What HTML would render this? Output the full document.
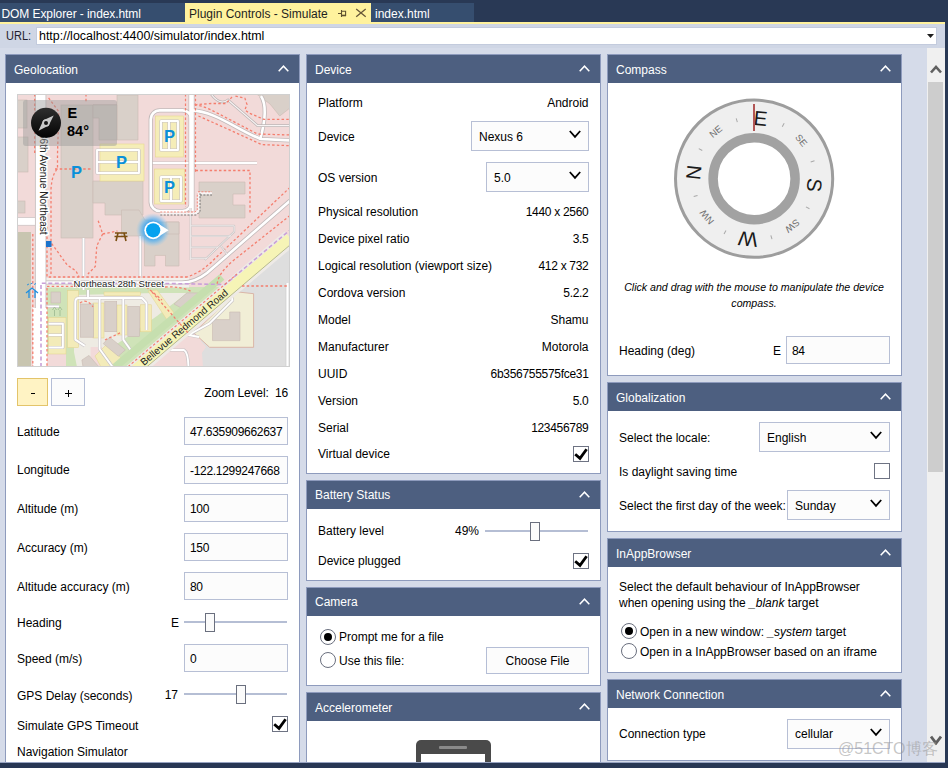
<!DOCTYPE html>
<html><head><meta charset="utf-8">
<style>
*{box-sizing:border-box;margin:0;padding:0}
html,body{width:948px;height:768px;overflow:hidden}
body{position:relative;background:#d5dbe9;font-family:"Liberation Sans",sans-serif;font-size:12px;color:#000}
.a{position:absolute}
.t{position:absolute;white-space:nowrap;line-height:14px}
.panel{position:absolute;background:#fff;border:1px solid #8e9bbd;overflow:hidden}
.hdr{position:absolute;left:0;top:0;right:0;height:28px;background:#4d5f80;color:#fff}
.hdr .tt{position:absolute;left:8px;top:7.5px;line-height:14px;white-space:nowrap}
.hdr svg{position:absolute;left:272px;top:10px}
.inp{position:absolute;border:1px solid #b7bfd5;background:#fcfcfc}
.sel{position:absolute;border:1px solid #b7bfd5;background:#fcfcfc}
.sel svg{position:absolute;right:7.4px;top:8.4px}
.cb{position:absolute;width:16px;height:16px;border:1px solid #6e7383;background:#fff}
.track{height:2px;background:#b5bed4}
.thumb{border:1px solid #6a6f7e;background:#fbfbfb}
.radio{position:absolute;width:16px;height:16px;border:1px solid #6a6f7e;border-radius:50%;background:#fff}
.radio.on::after{content:"";position:absolute;left:3px;top:3px;width:8px;height:8px;border-radius:50%;background:#000}
</style></head><body>
<div class="a" style="left:0;top:0;width:948px;height:22px;background:#293955"></div>
<div class="a" style="left:0;top:3px;width:185px;height:19px;background:#364e6f"></div>
<div class="a" style="left:185px;top:3px;width:186px;height:19px;background:#fff29d"></div>
<div class="a" style="left:371px;top:3px;width:103px;height:19px;background:#364e6f"></div>
<div class="a" style="left:0;top:22px;width:945px;height:2px;background:#fff29d"></div>
<div class="a" style="left:0;top:24px;width:945px;height:24px;background:#cfd6e5"></div>
<div class="t" style="left:1.5px;top:7px;color:#fff;letter-spacing:-0.08px">DOM Explorer - index.html</div>
<div class="t" style="left:189px;top:7px;color:#1e1e1e">Plugin Controls - Simulate</div>
<svg class="a" style="left:337px;top:9px" width="10" height="9" viewBox="0 0 10 9"><path d="M1 4.5 H4.5 M4.5 1 V8 M4.5 2.3 H8.6 V7 M4.5 6.3 H8.6" fill="none" stroke="#5e5030" stroke-width="1.1"/><path d="M4.5 6.6 H9" stroke="#5e5030" stroke-width="1.4"/></svg>
<svg class="a" style="left:355px;top:8px" width="12" height="10" viewBox="0 0 12 10"><path d="M1.2 1.1 L10.7 8.7 M10.7 1.1 L1.2 8.7" fill="none" stroke="#665638" stroke-width="1.3"/></svg>
<div class="t" style="left:375px;top:7px;color:#fff">index.html</div>
<div class="t" style="left:6px;top:29px;color:#1e1e2e;transform:scaleX(0.92);transform-origin:0 0">URL:</div>
<div class="a" style="left:36px;top:27px;width:901px;height:18px;background:#fff;border:1px solid #c3cbdd"></div>
<div class="t" style="left:39px;top:29px;font-size:12.45px">http://localhost:4400/simulator/index.html</div>
<svg class="a" style="left:927px;top:34px" width="8" height="5" viewBox="0 0 8 5"><path d="M0 0 H7 L3.5 4 Z" fill="#1e1e1e"/></svg>
<div class="a" style="left:927px;top:48px;width:18px;height:714px;background:#f0f0f0"></div>
<div class="a" style="left:928px;top:82px;width:15px;height:390px;background:#cdcdcd"></div>
<svg class="a" style="left:930px;top:64px" width="12" height="10" viewBox="0 0 12 10"><path d="M1 8.5 L6 3 L11 8.5" fill="none" stroke="#606060" stroke-width="2.6"/></svg>
<svg class="a" style="left:929.5px;top:735px" width="12" height="10" viewBox="0 0 12 10"><path d="M1 1.6 L6 8.2 L11 1.6" fill="none" stroke="#5e5e5e" stroke-width="2.8"/></svg>
<div class="panel" style="left:5px;top:54px;width:295px;height:740px"><div class="hdr"><span class="tt" style="top:8px">Geolocation</span><svg width="11" height="7" viewBox="0 0 11 7"><path d="M0.7 6.3 L5.5 1.2 L10.3 6.3" fill="none" stroke="#fff" stroke-width="1.5"/></svg></div></div>
<div class="panel" style="left:306px;top:54px;width:295px;height:420px"><div class="hdr"><span class="tt" style="top:8px">Device</span><svg width="11" height="7" viewBox="0 0 11 7"><path d="M0.7 6.3 L5.5 1.2 L10.3 6.3" fill="none" stroke="#fff" stroke-width="1.5"/></svg></div></div>
<div class="panel" style="left:306px;top:480px;width:295px;height:101px"><div class="hdr"><span class="tt" style="top:7px">Battery Status</span><svg width="11" height="7" viewBox="0 0 11 7"><path d="M0.7 6.3 L5.5 1.2 L10.3 6.3" fill="none" stroke="#fff" stroke-width="1.5"/></svg></div></div>
<div class="panel" style="left:306px;top:587px;width:295px;height:99px"><div class="hdr"><span class="tt" style="top:7px">Camera</span><svg width="11" height="7" viewBox="0 0 11 7"><path d="M0.7 6.3 L5.5 1.2 L10.3 6.3" fill="none" stroke="#fff" stroke-width="1.5"/></svg></div></div>
<div class="panel" style="left:306px;top:692px;width:295px;height:120px"><div class="hdr"><span class="tt" style="top:8px">Accelerometer</span><svg width="11" height="7" viewBox="0 0 11 7"><path d="M0.7 6.3 L5.5 1.2 L10.3 6.3" fill="none" stroke="#fff" stroke-width="1.5"/></svg></div></div>
<div class="panel" style="left:607px;top:54px;width:295px;height:322px"><div class="hdr"><span class="tt" style="top:8px">Compass</span><svg width="11" height="7" viewBox="0 0 11 7"><path d="M0.7 6.3 L5.5 1.2 L10.3 6.3" fill="none" stroke="#fff" stroke-width="1.5"/></svg></div></div>
<div class="panel" style="left:607px;top:382px;width:295px;height:150px"><div class="hdr"><span class="tt" style="top:8px">Globalization</span><svg width="11" height="7" viewBox="0 0 11 7"><path d="M0.7 6.3 L5.5 1.2 L10.3 6.3" fill="none" stroke="#fff" stroke-width="1.5"/></svg></div></div>
<div class="panel" style="left:607px;top:538px;width:295px;height:135px"><div class="hdr"><span class="tt" style="top:8px">InAppBrowser</span><svg width="11" height="7" viewBox="0 0 11 7"><path d="M0.7 6.3 L5.5 1.2 L10.3 6.3" fill="none" stroke="#fff" stroke-width="1.5"/></svg></div></div>
<div class="panel" style="left:607px;top:679px;width:295px;height:82px"><div class="hdr"><span class="tt" style="top:8px">Network Connection</span><svg width="11" height="7" viewBox="0 0 11 7"><path d="M0.7 6.3 L5.5 1.2 L10.3 6.3" fill="none" stroke="#fff" stroke-width="1.5"/></svg></div></div>
<svg class="a" style="left:17px;top:94px" width="273" height="273" viewBox="0 0 273 273">
<defs>
<clipPath id="mc"><rect x="0" y="0" width="273" height="273"/></clipPath>
<radialGradient id="glow"><stop offset="0.4" stop-color="#1e96f0" stop-opacity="0.95"/><stop offset="0.7" stop-color="#46aef5" stop-opacity="0.55"/><stop offset="1" stop-color="#7cc6f7" stop-opacity="0"/></radialGradient>
<linearGradient id="cg" x1="0" y1="0" x2="0" y2="1"><stop offset="0" stop-color="#2e2e2e"/><stop offset="1" stop-color="#030303"/></linearGradient>
</defs>
<g clip-path="url(#mc)">
<rect x="0" y="0" width="273" height="273" fill="#f2dad9"/>
<!-- gray area bottom right (below road) -->
<path d="M273 150 L273 273 L175 273 L189 253 L177 239 Z" fill="#dedede"/>
<!-- pink bottom (below road, left) -->
<path d="M118 273 L176 234 L184 246 L186 273 Z" fill="#f2dad9"/>
<!-- light strip along road lower side -->
<!-- residential block background -->
<path d="M30 193 L210 193 L150 240 L112 273 L30 273 Z" fill="#cfe3b8"/>
<path d="M57 201 L138 199 L170 199 L140 222 L100 250 L85 273 L60 273 L57 258 Z" fill="#eeebe3"/>
<path d="M30 260 L49 260 L49 273 L30 273 Z M73.6 253 L85 253 L92 273 L73.6 273 Z" fill="#f2dad9"/>
<!-- olive strip -->
<rect x="0" y="138" width="14" height="135" fill="#c8c5b0"/>
<!-- yellow residential strips -->
<g fill="#f3ebb9" stroke="#e3d28a" stroke-width="0.5">
<rect x="50.6" y="196.6" width="11" height="57"/>
<rect x="87" y="198" width="36.4" height="3.5"/>
<rect x="76" y="209" width="11" height="35"/>
<rect x="100" y="211" width="10" height="30"/>
<rect x="123.4" y="210.8" width="11" height="27"/>
<rect x="31.6" y="223.5" width="17.4" height="36.5"/>
<path d="M131 197 L140 196 L160 223 L152 229 Z"/>
<path d="M78 262 L90 250 L104 264 L96 273 L84 273 Z"/>
</g>
<!-- beige lot -->
<path d="M177 239 L219.4 197.8 L236.6 199.7 L236.6 253.3 L192.6 253.3 Z" fill="#f1eed6" stroke="#d6a89a" stroke-width="0.8"/>
<!-- buildings -->
<g fill="#d9d0c9" stroke="#c9bab2" stroke-width="0.6">
<rect x="0" y="6" width="10" height="28"/>
<rect x="0" y="43" width="11" height="35"/>
<rect x="0" y="107" width="8" height="12"/>
<rect x="44" y="11" width="32" height="133"/>
<path d="M76 11 L100 11 L100 1 L121 1 L121 46 L100 46 L100 11 Z"/>
<path d="M76 11 L100 11 L100 46 L82 46 L82 24 L76 24 Z"/>
<path d="M76 87 L126 87 L126 121 L88 121 L88 109 L76 109 Z"/>
<path d="M127.5 128 L162 128 L162 172 L148.5 172 L148.5 161.4 L138 161.4 L138 172 L127.5 172 Z"/>
<path d="M104.5 116 L122 116 L128 126 L136 126 L136 142 L104.5 142 Z"/>
<path d="M182 88 L228 88 L228 100 L216 100 L216 111 L228 111 L228 124 L182 124 Z"/>
<path d="M149 128 L162 128 L162 140 L149 140 Z"/>
<path d="M239.5 0 L273 0 L273 14 L262.7 22 L253 10 Z"/>
<rect x="34" y="198" width="9.5" height="11"/>
<rect x="63.3" y="210" width="13.4" height="33.2"/>
<rect x="87.8" y="207.6" width="11.9" height="30.1"/>
<rect x="110.8" y="212.4" width="11.8" height="30.1"/>
<path d="M92.6 243.2 L108.4 255.9 L101.3 262.2 L86.2 249.6 Z"/>
<path d="M64.9 266 L72 261.4 L82 273 L66 273 Z"/>
<path d="M157 210 L170 198.8 L181 199 L168 216 Z"/>
<path d="M195.5 225.6 L212.7 225.6 L212.7 218 L223 218 L223 246.6 L195.5 246.6 Z"/>
</g>
<!-- yellow parking lots -->
<g fill="#f5edb8" stroke="#e8d98e" stroke-width="0.6">
<rect x="83" y="50" width="44" height="37"/>
<rect x="138.5" y="22" width="28" height="41"/>
<rect x="137.5" y="75" width="30" height="35"/>
</g>
<!-- service roads (white with gray casing) -->
<g fill="none" stroke="#c9c4c6" stroke-width="3.2" stroke-linejoin="round">
<rect x="80" y="56" width="42" height="23"/><path d="M80 68 H122"/>
<rect x="144" y="27" width="17" height="29"/><path d="M152 27 V56"/>
<rect x="144" y="83" width="20" height="24"/><path d="M154 83 V107"/>
<path d="M133 69 H240"/>
<path d="M66.5 144 V196 M123.3 142 V186"/>
<path d="M67.8 251.9 L58.3 245.6 V208 Q58.3 204 62 204 H125 L129.5 209 V236 M82.6 204 V255 L95.7 273 M106.3 204 V245.6 L113.7 256 M71 196 V204"/>
<path d="M28.5 212.4 H42 M31.6 229.8 H45.9 V253.5 H31.6 M31.6 241 H45.9"/>
<path d="M213.6 198.8 L215.5 206.4 L192.6 229.4 L171.5 241 L182 243"/>
<path d="M150.4 256 H167 Q171 258 171.5 273"/>
</g>
<g fill="none" stroke="#ffffff" stroke-width="1.9" stroke-linejoin="round">
<rect x="80" y="56" width="42" height="23"/><path d="M80 68 H122"/>
<rect x="144" y="27" width="17" height="29"/><path d="M152 27 V56"/>
<rect x="144" y="83" width="20" height="24"/><path d="M154 83 V107"/>
<path d="M133 69 H240"/>
<path d="M66.5 144 V196 M123.3 142 V186"/>
<path d="M67.8 251.9 L58.3 245.6 V208 Q58.3 204 62 204 H125 L129.5 209 V236 M82.6 204 V255 L95.7 273 M106.3 204 V245.6 L113.7 256 M71 196 V204"/>
<path d="M28.5 212.4 H42 M31.6 229.8 H45.9 V253.5 H31.6 M31.6 241 H45.9"/>
<path d="M213.6 198.8 L215.5 206.4 L192.6 229.4 L171.5 241 L182 243"/>
<path d="M150.4 256 H167 Q171 258 171.5 273"/>
</g>
<path d="M28 188.8 H172" stroke="#f3efeb" stroke-width="9.6"/>
<!-- bigger roads: casing -->
<g fill="none" stroke="#c2baba" stroke-width="4.2">
<rect x="133.7" y="16.4" width="40.8" height="100.6" rx="9"/>
<path d="M174.5 16.4 C198 17 222 37 244 45 L273 46.4"/>
<path d="M244 2 Q252 14 243 46"/>
<path d="M28 188.5 H165 Q178 188.5 190 179 L273 106.7"/>

</g>
<path d="M174.5 0 V117" stroke="#c2baba" stroke-width="6"/>
<g fill="none" stroke="#ffffff" stroke-width="2.6">
<rect x="133.7" y="16.4" width="40.8" height="100.6" rx="9"/>
<path d="M174.5 16.4 C198 17 222 37 244 45 L273 46.4"/>
<path d="M244 2 Q252 14 243 46"/>
<path d="M28 188.5 H165 Q178 188.5 190 179 L273 106.7"/>

</g>
<path d="M174.5 0 V117" stroke="#ffffff" stroke-width="4.6"/>
<path d="M168.5 0 V113 M178.5 0 V78" fill="none" stroke="#f47e6e" stroke-width="1.2" stroke-dasharray="2.5 2.2"/>
<path d="M194 0 Q203 12 211 6 L240.5 31.6 H273" fill="none" stroke="#bdb6b6" stroke-width="2.6"/>
<path d="M194 0 Q203 12 211 6 L240.5 31.6 H273" fill="none" stroke="#f8f4f4" stroke-width="1.1"/>
<path d="M270.5 189 V273" stroke="#c8c8c8" stroke-width="3.6"/>
<path d="M270.5 189 V273" stroke="#ffffff" stroke-width="2.4"/>

<path d="M0 127.4 H20" stroke="#cec7c7" stroke-width="8.6"/>
<path d="M0 127.4 H20" stroke="#ffffff" stroke-width="7"/>
<!-- 136th avenue -->
<path d="M23.7 0 V216 M23 216 V273" stroke="#cec7c7" stroke-width="11.5"/>
<path d="M23.7 0 V216" stroke="#ffffff" stroke-width="9.5"/>
<path d="M23 214 V273" stroke="#ffffff" stroke-width="14"/>
<!-- green band along road -->
<path d="M95 273 L265 133" stroke="#bcd9a4" stroke-width="30" stroke-opacity="0" />
<path d="M98 273 L205 183" stroke="#c6dfaf" stroke-width="7.5"/>
<!-- Bellevue Redmond Road -->
<path d="M112 281 L273 144" stroke="#eeeae6" stroke-width="17"/>
<path d="M112 281 L273 144" stroke="#f6f4b6" stroke-width="10"/>
<path d="M115.5 285 L276.5 148" stroke="#a9b072" stroke-width="0.8"/>
<!-- purple boundary -->
<g fill="none" stroke="#c9a0d8" stroke-width="1.6" stroke-dasharray="4 2.5">
<path d="M24 273 V189.3 H140 L208 190.5 L273 136"/>
</g>
<!-- red dashed footways -->
<g fill="none" stroke="#f47e6e" stroke-width="1.3" stroke-dasharray="2.5 2.2">
<path d="M31.6 3.8 L41.8 17.7 L40.5 60 V75 Q35 80 34 95 V182"/>
<path d="M38 75 H75"/>
<path d="M17.7 0 V60"/>
<path d="M69 0 V8"/>
<path d="M30 133 V183 H170"/>
<path d="M15.8 140 V273 M30 194 V273 M30 192.3 H60"/>
<path d="M34.7 149.6 L50.2 171 L59 177 L62 182.8"/>
<path d="M81.2 126.7 L85.7 140 L79.8 151.8 L78.3 172.5 L70.9 180 M85.7 140 L100.4 137"/>
<path d="M178.5 76.5 H233 V120"/>
<path d="M177.7 10.5 Q186 12 194 15.8 L240.5 40 L273 41"/>
<path d="M181.4 22 L215 37 L244.7 50.6 L273 51.7"/>
<path d="M273 93.4 L196.5 166 Q185 178 170 183"/>
<path d="M273 121.5 L217 166 Q200 180 200 192"/>
<path d="M225 192 H273"/>
<path d="M63 209 Q70 204 76 213"/>
<path d="M148 193 Q165 192 175 198 M135 198 L172 240"/>
<path d="M126 190 L145 206"/>
<path d="M88 246 L105 238"/>

<path d="M218.4 2.1 L227.9 4.2 L230 10.5 L227.9 15.8 L232 19 L246.8 25.3 L273 25.3 M215 3 L209 9.5 L194 9.5 L180 10.5"/>
</g>
<path d="M107.5 275.7 L220 180" fill="none" stroke="#f47e6e" stroke-width="1.2" stroke-dasharray="2.5 2.2"/>
<g fill="none" stroke-linejoin="round"><path d="M173.6 114 V166 M173.6 131.8 H217.2 V137.7 L187.6 166 M173.6 142.1 H214 M173.6 153.2 H201 M173.6 164.3 H190 M204 152 L210 160" stroke="#cbc6c6" stroke-width="2"/><path d="M173.6 114 V166 M173.6 131.8 H217.2 V137.7 L187.6 166 M173.6 142.1 H214 M173.6 153.2 H201 M173.6 164.3 H190 M204 152 L210 160" stroke="#f6f1f1" stroke-width="0.8"/></g>
<path d="M143.3 119.5 H178.8 L181.7 116.6 V99.3 H195" fill="none" stroke="#f8f4f4" stroke-width="2.4"/>
<!-- black dashed steps -->
<path d="M143.3 121 H179.5 L183 117.5 V99.3 M183 101 H195" fill="none" stroke="#666" stroke-width="0.9" stroke-dasharray="2 1.4"/>
<path d="M143.3 118 H178 L180.3 115.7 V99 M181 97.8 H195" fill="none" stroke="#f47e6e" stroke-width="0.9" stroke-dasharray="2 1.4"/>
<!-- blue stop -->
<rect x="29" y="147" width="5.5" height="6" fill="#1b74cc"/>
<!-- shelter icon -->
<path d="M9 199 L15 194 L21 199 M12 197 V204 M18 197 V204" fill="none" stroke="#1e8fe0" stroke-width="1.3"/>
<path d="M10 191 l2 -1 M13.5 190 l2 -1 M17 190.5 l2 -1" stroke="#1e8fe0" stroke-width="0.9"/>
<!-- trees -->
<path d="M37.5 222 v-6 M43 222 v-6 M35.5 216 l2 -3 l2 3 M41 216 l2 -3 l2 3" stroke="#9cb98f" stroke-width="0.8" fill="none"/>
<!-- picnic -->
<path d="M98 139 H110 M97.5 142.5 H110.5 M101 139 L99 147 M107 139 L109 147" stroke="#7a4e10" stroke-width="1.6" fill="none"/>
<!-- P labels -->
<g fill="#0a90da" font-family="Liberation Sans" font-weight="bold" font-size="16.5" text-anchor="middle">
<text x="104.5" y="74">P</text>
<text x="59.5" y="84">P</text>
<text x="152.6" y="48">P</text>
<text x="152.6" y="99">P</text>
</g>
<!-- street labels -->
<text x="0" y="0" font-family="Liberation Sans" font-size="10" fill="#222" stroke="#fff" stroke-width="3" paint-order="stroke" transform="translate(22.8,33.5) rotate(90)">136th Avenue Northeast</text>
<text x="56.6" y="193" font-family="Liberation Sans" font-size="9.5" fill="#222" stroke="#fff" stroke-width="1.6" paint-order="stroke">Northeast 28th Street</text>
<text x="0" y="0" font-family="Liberation Sans" font-size="10" fill="#222" transform="translate(127,272) rotate(-40.4)">Bellevue Redmond Road</text>
<!-- location dot -->
<circle cx="136" cy="136" r="17" fill="url(#glow)"/>
<path d="M142.5 130.5 L151.6 136.3 L142.5 142 Z" fill="#fff"/>
<circle cx="136.2" cy="136.3" r="8.9" fill="#fff"/>
<circle cx="136.2" cy="136.3" r="7.1" fill="#06a2ef"/>
<!-- compass overlay -->
<rect x="6" y="6" width="94" height="46" rx="3" fill="#9a9a9a" fill-opacity="0.45"/>
<circle cx="29" cy="28.8" r="15" fill="url(#cg)"/>
<path d="M21.5 36.7 L26.3 26.3 L31.7 31.5 Z M36.7 21.5 L31.7 31.5 L26.3 26.3 Z" fill="#c8c8c8"/>
<circle cx="29" cy="28.9" r="3.6" fill="#c8c8c8"/>
<circle cx="29" cy="28.9" r="2" fill="#151515"/>
<text x="50.5" y="23.8" font-family="Liberation Sans" font-weight="bold" font-size="14.5" fill="#000">E</text>
<text x="50" y="41.5" font-family="Liberation Sans" font-weight="bold" font-size="14.5" fill="#000">84°</text>
</g>
<rect x="0.5" y="0.5" width="272" height="272" fill="none" stroke="#d0d0d0" stroke-width="1"/>
</svg>

<div class="a" style="left:17px;top:378px;width:31px;height:28px;background:#fff3c4;border:1px solid #e3c46a"></div>
<div class="a" style="left:51px;top:378px;width:34px;height:28px;background:#fcfcfc;border:1px solid #b5bed6"></div>
<div class="a" style="left:31px;top:393px;width:4px;height:1px;background:#000"></div>
<div class="a" style="left:65px;top:393px;width:7px;height:1px;background:#000"></div><div class="a" style="left:68px;top:390px;width:1px;height:7px;background:#000"></div>
<div class="t" style="right:660px;top:385.5px;letter-spacing:-0.15px">Zoom Level:&nbsp; 16</div>
<div class="t" style="left:17px;top:425.4px;">Latitude</div>
<div class="t" style="left:17px;top:463.2px;">Longitude</div>
<div class="t" style="left:17px;top:502.20000000000005px;">Altitude (m)</div>
<div class="t" style="left:17px;top:541.3px;">Accuracy (m)</div>
<div class="t" style="left:17px;top:579.9px;">Altitude accuracy (m)</div>
<div class="t" style="left:17px;top:616.4px;">Heading</div>
<div class="t" style="left:17px;top:652.3px;">Speed (m/s)</div>
<div class="t" style="left:17px;top:688.5px;">GPS Delay (seconds)</div>
<div class="t" style="left:17px;top:718.5px;">Simulate GPS Timeout</div>
<div class="t" style="left:17px;top:745px;">Navigation Simulator</div>
<div class="inp" style="left:184px;top:417px;width:104px;height:28px;"></div>
<div class="t" style="left:190px;top:424.5px;letter-spacing:-0.3px">47.635909662637</div>
<div class="inp" style="left:184px;top:456px;width:104px;height:28px;"></div>
<div class="t" style="left:190px;top:463.5px;letter-spacing:-0.3px">-122.1299247668</div>
<div class="inp" style="left:184px;top:494px;width:104px;height:28px;"></div>
<div class="t" style="left:190px;top:501.5px;letter-spacing:-0.3px">100</div>
<div class="inp" style="left:184px;top:533px;width:104px;height:28px;"></div>
<div class="t" style="left:190px;top:540.5px;letter-spacing:-0.3px">150</div>
<div class="inp" style="left:184px;top:572px;width:104px;height:28px;"></div>
<div class="t" style="left:190px;top:579.5px;letter-spacing:-0.3px">80</div>
<div class="inp" style="left:184px;top:644px;width:104px;height:28px;"></div>
<div class="t" style="left:190px;top:651.5px;letter-spacing:-0.3px">0</div>
<div class="t" style="right:769px;top:616px;">E</div>
<div class="track a" style="left:184px;top:621px;width:103px;height:2px;"></div>
<div class="thumb a" style="left:205px;top:613px;width:10px;height:19px;"></div>
<div class="t" style="right:770px;top:688px;">17</div>
<div class="track a" style="left:184px;top:693px;width:103px;height:2px;"></div>
<div class="thumb a" style="left:236px;top:685px;width:10px;height:19px;"></div>
<div class="cb" style="left:272px;top:716px;width:16px;height:16px;"><svg width="16" height="16" viewBox="0 0 16 16" style="position:absolute;left:-1px;top:-1px"><path d="M2.2 8.3 L7 12.4 L13.6 3.2" fill="none" stroke="#000" stroke-width="2.8"/></svg></div>
<div class="t" style="left:318px;top:96px;">Platform</div>
<div class="t" style="right:359.5px;top:96px;">Android</div>
<div class="t" style="left:318px;top:204.8px;">Physical resolution</div>
<div class="t" style="right:359.5px;top:204.8px;letter-spacing:-0.3px">1440 x 2560</div>
<div class="t" style="left:318px;top:231.9px;">Device pixel ratio</div>
<div class="t" style="right:359.5px;top:231.9px;letter-spacing:-0.3px">3.5</div>
<div class="t" style="left:318px;top:259px;">Logical resolution (viewport size)</div>
<div class="t" style="right:359.5px;top:259px;letter-spacing:-0.3px">412 x 732</div>
<div class="t" style="left:318px;top:286px;">Cordova version</div>
<div class="t" style="right:359.5px;top:286px;letter-spacing:-0.3px">5.2.2</div>
<div class="t" style="left:318px;top:313px;">Model</div>
<div class="t" style="right:359.5px;top:313px;">Shamu</div>
<div class="t" style="left:318px;top:340px;">Manufacturer</div>
<div class="t" style="right:359.5px;top:340px;">Motorola</div>
<div class="t" style="left:318px;top:367px;">UUID</div>
<div class="t" style="right:359.5px;top:367px;letter-spacing:-0.3px">6b356755575fce31</div>
<div class="t" style="left:318px;top:394px;">Version</div>
<div class="t" style="right:359.5px;top:394px;letter-spacing:-0.3px">5.0</div>
<div class="t" style="left:318px;top:420.7px;">Serial</div>
<div class="t" style="right:359.5px;top:420.7px;letter-spacing:-0.3px">123456789</div>
<div class="t" style="left:318px;top:130px;">Device</div>
<div class="sel" style="left:471px;top:121px;width:118px;height:30px;"><svg width="12" height="9" viewBox="0 0 12 9"><path d="M0.8 1 L6 6.8 L11.2 1" fill="none" stroke="#000" stroke-width="1.8"/></svg></div>
<div class="t" style="left:479px;top:130px;">Nexus 6</div>
<div class="t" style="left:318px;top:171px;">OS version</div>
<div class="sel" style="left:486px;top:162px;width:103px;height:30px;"><svg width="12" height="9" viewBox="0 0 12 9"><path d="M0.8 1 L6 6.8 L11.2 1" fill="none" stroke="#000" stroke-width="1.8"/></svg></div>
<div class="t" style="left:494px;top:171px;">5.0</div>
<div class="t" style="left:318px;top:446.7px;">Virtual device</div>
<div class="cb" style="left:573px;top:446px;width:16px;height:16px;"><svg width="16" height="16" viewBox="0 0 16 16" style="position:absolute;left:-1px;top:-1px"><path d="M2.2 8.3 L7 12.4 L13.6 3.2" fill="none" stroke="#000" stroke-width="2.8"/></svg></div>
<div class="t" style="left:318px;top:523.8px;">Battery level</div>
<div class="t" style="right:469px;top:523.8px;">49%</div>
<div class="track a" style="left:485px;top:530px;width:103px;height:2px;"></div>
<div class="thumb a" style="left:530px;top:521.5px;width:10px;height:19px;"></div>
<div class="t" style="left:318px;top:554px;">Device plugged</div>
<div class="cb" style="left:573px;top:553px;width:16px;height:16px;"><svg width="16" height="16" viewBox="0 0 16 16" style="position:absolute;left:-1px;top:-1px"><path d="M2.2 8.3 L7 12.4 L13.6 3.2" fill="none" stroke="#000" stroke-width="2.8"/></svg></div>
<div class="radio on" style="left:320px;top:629px;width:16px;height:16px;"></div>
<div class="t" style="left:339px;top:629.8px;">Prompt me for a file</div>
<div class="radio" style="left:320px;top:652px;width:16px;height:16px;"></div>
<div class="t" style="left:339px;top:653.6px;">Use this file:</div>
<div class="a" style="left:486px;top:647px;width:103px;height:27px;background:#fcfcfc;border:1px solid #b5bed6"></div>
<div class="t" style="left:387.5px;width:300px;text-align:center;top:654.2px;">Choose File</div>
<div class="a" style="left:416px;top:740px;width:75px;height:40px;background:#4a4a4a;border-radius:5px 5px 0 0"></div>
<div class="a" style="left:421px;top:754px;width:64px;height:30px;background:#fff"></div>
<div class="a" style="left:439px;top:746px;width:28px;height:3px;background:#8a8a8a;border-radius:1px"></div>
<svg class="a" style="left:664px;top:90px" width="180" height="180" viewBox="0 0 180 180">
<circle cx="90.1" cy="88.7" r="78.6" fill="#efefef" stroke="#9d9d9d" stroke-width="3"/>
<circle cx="90.1" cy="88.7" r="41" fill="#ffffff" stroke="#a2a2a2" stroke-width="9.5"/>
<g transform="rotate(-84 90.1 88.7)" font-family="Liberation Sans" text-anchor="middle">
<text x="90.1" y="35.2" font-size="20.5" fill="#1a1a1a" transform="rotate(0 90.1 88.7)">N</text>
<text x="90.1" y="35.2" font-size="20.5" fill="#1a1a1a" transform="rotate(90 90.1 88.7)">E</text>
<text x="90.1" y="35.2" font-size="20.5" fill="#1a1a1a" transform="rotate(180 90.1 88.7)">S</text>
<text x="90.1" y="35.2" font-size="20.5" fill="#1a1a1a" transform="rotate(270 90.1 88.7)">W</text>
<text x="90.1" y="31.200000000000003" font-size="9.5" fill="#6e6e6e" transform="rotate(45 90.1 88.7)">NE</text>
<text x="90.1" y="31.200000000000003" font-size="9.5" fill="#6e6e6e" transform="rotate(135 90.1 88.7)">SE</text>
<text x="90.1" y="31.200000000000003" font-size="9.5" fill="#6e6e6e" transform="rotate(225 90.1 88.7)">SW</text>
<text x="90.1" y="31.200000000000003" font-size="9.5" fill="#6e6e6e" transform="rotate(315 90.1 88.7)">NW</text>
<line x1="90.1" y1="29.700000000000003" x2="90.1" y2="25.700000000000003" stroke="#a8a8a8" stroke-width="1" transform="rotate(22.5 90.1 88.7)"/>
<line x1="90.1" y1="29.700000000000003" x2="90.1" y2="25.700000000000003" stroke="#a8a8a8" stroke-width="1" transform="rotate(67.5 90.1 88.7)"/>
<line x1="90.1" y1="29.700000000000003" x2="90.1" y2="25.700000000000003" stroke="#a8a8a8" stroke-width="1" transform="rotate(112.5 90.1 88.7)"/>
<line x1="90.1" y1="29.700000000000003" x2="90.1" y2="25.700000000000003" stroke="#a8a8a8" stroke-width="1" transform="rotate(157.5 90.1 88.7)"/>
<line x1="90.1" y1="29.700000000000003" x2="90.1" y2="25.700000000000003" stroke="#a8a8a8" stroke-width="1" transform="rotate(202.5 90.1 88.7)"/>
<line x1="90.1" y1="29.700000000000003" x2="90.1" y2="25.700000000000003" stroke="#a8a8a8" stroke-width="1" transform="rotate(247.5 90.1 88.7)"/>
<line x1="90.1" y1="29.700000000000003" x2="90.1" y2="25.700000000000003" stroke="#a8a8a8" stroke-width="1" transform="rotate(292.5 90.1 88.7)"/>
<line x1="90.1" y1="29.700000000000003" x2="90.1" y2="25.700000000000003" stroke="#a8a8a8" stroke-width="1" transform="rotate(337.5 90.1 88.7)"/>
</g>
<line x1="90.0" y1="14" x2="90.0" y2="41" stroke="#b25656" stroke-width="2"/>
</svg>

<div class="t" style="left:604px;width:300px;text-align:center;top:280px;font-size:10.6px"><i>Click and drag with the mouse to manipulate the device</i></div>
<div class="t" style="left:604px;width:300px;text-align:center;top:295.5px;font-size:10.6px"><i>compass.</i></div>
<div class="t" style="left:619px;top:344.4px;">Heading (deg)</div>
<div class="t" style="right:167px;top:344.4px;">E</div>
<div class="inp" style="left:786px;top:336px;width:104px;height:28px;"></div>
<div class="t" style="left:792px;top:344.4px;letter-spacing:-0.3px">84</div>
<div class="t" style="left:619px;top:430.7px;">Select the locale:</div>
<div class="sel" style="left:759px;top:422px;width:131px;height:30px;"><svg width="12" height="9" viewBox="0 0 12 9"><path d="M0.8 1 L6 6.8 L11.2 1" fill="none" stroke="#000" stroke-width="1.8"/></svg></div>
<div class="t" style="left:767px;top:430.7px;">English</div>
<div class="t" style="left:619px;top:464.6px;">Is daylight saving time</div>
<div class="cb" style="left:874px;top:463px;width:16px;height:16px;"></div>
<div class="t" style="left:619px;top:498.7px;">Select the first day of the week:</div>
<div class="sel" style="left:787px;top:490px;width:103px;height:30px;"><svg width="12" height="9" viewBox="0 0 12 9"><path d="M0.8 1 L6 6.8 L11.2 1" fill="none" stroke="#000" stroke-width="1.8"/></svg></div>
<div class="t" style="left:795px;top:498.7px;">Sunday</div>
<div class="t" style="left:619px;top:580.1px;">Select the default behaviour of InAppBrowser</div>
<div class="t" style="left:619px;top:595.9px;">when opening using the <i>_blank</i> target</div>
<div class="radio on" style="left:621px;top:623px;width:16px;height:16px;"></div>
<div class="t" style="left:640px;top:625px;">Open in a new window: <i>_system</i> target</div>
<div class="radio" style="left:621px;top:643px;width:16px;height:16px;"></div>
<div class="t" style="left:640px;top:645px;">Open in a InAppBrowser based on an iframe</div>
<div class="t" style="left:619px;top:727px;">Connection type</div>
<div class="sel" style="left:787px;top:719px;width:103px;height:30px;"><svg width="12" height="9" viewBox="0 0 12 9"><path d="M0.8 1 L6 6.8 L11.2 1" fill="none" stroke="#000" stroke-width="1.8"/></svg></div>
<div class="t" style="left:795px;top:727px;">cellular</div>
<div class="t" style="left:838px;top:740px;font-size:16px;line-height:18px;color:rgba(150,150,150,0.55)">@51CTO博客</div>
<div class="a" style="left:945px;top:0;width:3px;height:768px;background:#293955"></div>
<div class="a" style="left:0;top:762px;width:945px;height:1px;background:#97a3c2"></div>
<div class="a" style="left:0;top:763px;width:948px;height:5px;background:#283754"></div>
</body></html>
